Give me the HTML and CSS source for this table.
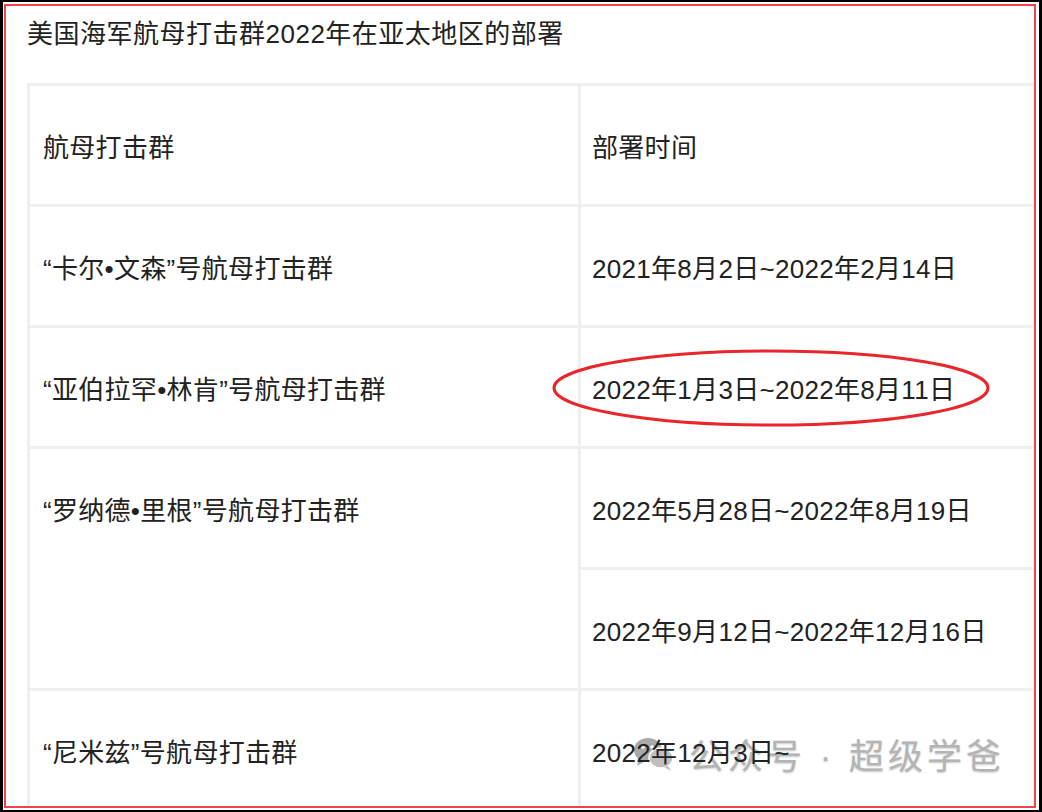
FILE: index.html
```html
<!DOCTYPE html>
<html lang="zh">
<head>
<meta charset="utf-8">
<title>美国海军航母打击群2022年在亚太地区的部署</title>
<link rel="stylesheet" href="styles.css">
</head>
<body>
<div class="page">
  <div class="frame">
    <h1 class="title">美国海军航母打击群2022年在亚太地区的部署</h1>
    <table class="deploy">
      <colgroup><col class="c1"><col class="c2"></colgroup>
      <tbody>
        <tr><td>航母打击群</td><td class="date">部署时间</td></tr>
        <tr><td>“卡尔•文森”号航母打击群</td><td class="date">2021年8月2日~2022年2月14日</td></tr>
        <tr><td>“亚伯拉罕•林肯”号航母打击群</td><td class="date">2022年1月3日~2022年8月11日</td></tr>
        <tr><td rowspan="2">“罗纳德•里根”号航母打击群</td><td class="date">2022年5月28日~2022年8月19日</td></tr>
        <tr><td class="date">2022年9月12日~2022年12月16日</td></tr>
        <tr><td>“尼米兹”号航母打击群</td><td class="date">2022年12月3日~</td></tr>
      </tbody>
    </table>
    <svg class="ellipse" width="444" height="84" viewBox="0 0 444 84"><ellipse cx="222" cy="42" rx="217" ry="37" fill="none" stroke="#e8262b" stroke-width="3"/></svg>
    <div class="watermark">
      <svg class="wm-icon" width="42" height="36" viewBox="0 0 42 36">
        <ellipse cx="15" cy="14" rx="14" ry="12" fill="#9a9a9a"/>
        <path d="M6 23 L4 30 L12 25 Z" fill="#9a9a9a"/>
        <ellipse cx="28" cy="22" rx="12" ry="10" fill="#b5b5b5" stroke="#fff" stroke-width="1.5"/>
        <path d="M35 30 L38 35 L31 31 Z" fill="#b5b5b5"/>
        <circle cx="10" cy="11" r="1.8" fill="#fff"/>
        <circle cx="19" cy="11" r="1.8" fill="#fff"/>
        <circle cx="24" cy="20" r="1.5" fill="#fff"/>
        <circle cx="32" cy="20" r="1.5" fill="#fff"/>
      </svg>
      <span class="wm-text">公众号 · 超级学爸</span>
    </div>
  </div>
</div>
</body>
</html>
```
FILE: styles.css
```css
html, body {
  margin: 0;
  height: 812px;
  overflow: hidden;
}
body {
  background: #000;
  padding: 2px 3px 2px 3px;
  box-sizing: border-box;
  font-family: "Liberation Sans", "Noto Sans CJK SC", sans-serif;
  color: #222;
}
.page {
  background: #fff;
  height: 808px;
  padding: 2px 3px 2px 1px;
  box-sizing: border-box;
}
.frame {
  position: relative;
  height: 804px;
  box-sizing: border-box;
  border: 2px solid #f2434b;
  overflow: hidden;
  padding: 8px 0 0 21px;
}
.title {
  margin: 0;
  font-size: 26px;
  font-weight: normal;
  line-height: 40px;
  letter-spacing: 0.5px;
}
.deploy {
  position: relative;
  z-index: 1;
  margin-top: 29px;
  border-collapse: collapse;
  table-layout: fixed;
  width: 1006px;
}
.deploy .c1 { width: 551px; }
.deploy .c2 { width: 455px; }
.deploy td {
  border: 3px solid #efefef;
  padding: 47px 12px 40px 13px;
  font-size: 26px;
  line-height: 31px;
  vertical-align: top;
  white-space: nowrap;
  letter-spacing: 0.3px;
}
.deploy td.date {
  padding-left: 11px;
}
.ellipse {
  position: absolute;
  z-index: 2;
  left: 543px;
  top: 340px;
}
.watermark {
  position: absolute;
  z-index: 0;
  left: 627px;
  top: 722px;
  display: flex;
  align-items: center;
  gap: 14px;
  opacity: 0.85;
}
.wm-text {
  font-size: 35px;
  color: #a8a8a8;
  letter-spacing: 4px;
  text-shadow: 0 1px 2px rgba(0,0,0,0.25);
}
```
